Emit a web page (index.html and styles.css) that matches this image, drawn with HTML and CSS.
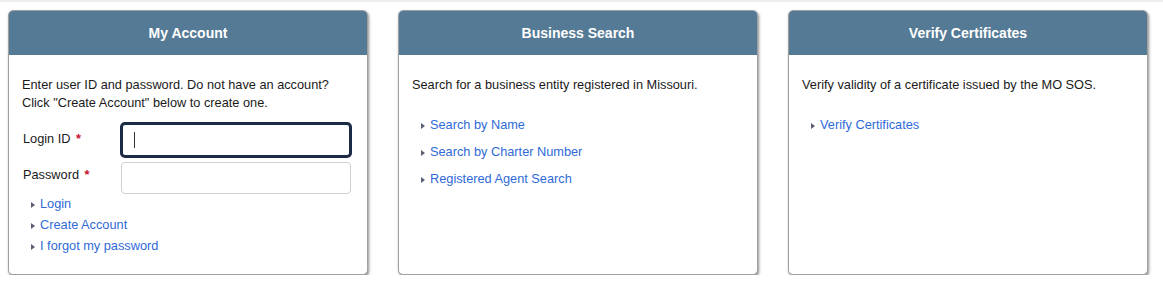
FILE: index.html
```html
<!DOCTYPE html>
<html lang="en">
<head>
    <meta charset="UTF-8">
    <meta content="width=device-width, initial-scale=1.0" name="viewport">
    <title>Missouri SOS - Business Services</title>
    <link rel="stylesheet" href="styles.css">
</head>
<body>
<div class="page">
    <div class="panels">
        <div class="panel">
            <div class="panel-header">My Account</div>
            <div class="panel-body">
                <p class="intro">Enter user ID and password. Do not have an account? Click "Create Account" below to create one.</p>
                <div class="form-row">
                    <label for="login-id">Login ID <span class="required">*</span></label>
                    <div class="field is-focused">
                        <input id="login-id" type="text">
                    </div>
                </div>
                <div class="form-row">
                    <label for="password">Password <span class="required">*</span></label>
                    <div class="field">
                        <input id="password" type="password">
                    </div>
                </div>
                <ul class="links tight">
                    <li><a href="#">Login</a></li>
                    <li><a href="#">Create Account</a></li>
                    <li><a href="#">I forgot my password</a></li>
                </ul>
            </div>
        </div>

        <div class="panel">
            <div class="panel-header">Business Search</div>
            <div class="panel-body">
                <p class="intro">Search for a business entity registered in Missouri.</p>
                <ul class="links">
                    <li><a href="#">Search by Name</a></li>
                    <li><a href="#">Search by Charter Number</a></li>
                    <li><a href="#">Registered Agent Search</a></li>
                </ul>
            </div>
        </div>

        <div class="panel">
            <div class="panel-header">Verify Certificates</div>
            <div class="panel-body">
                <p class="intro">Verify validity of a certificate issued by the MO SOS.</p>
                <ul class="links">
                    <li><a href="#">Verify Certificates</a></li>
                </ul>
            </div>
        </div>
    </div>
</div>
</body>
</html>
```

FILE: styles.css
```css
body {
    font-family: 'Liberation Sans', Arial, sans-serif;
    font-size: 12.75px;
    color: #1a1a1a;
    background-color: #fff;
    margin: 0;
}

.page {
    border-top: 2px solid #efefef;
    padding: 8px 8px 0 8px;
}

.panels {
    display: flex;
    gap: 30px;
}

.panel {
    width: 358px;
    height: 263px;
    border: 1px solid #a0a0a0;
    border-radius: 5px;
    box-shadow: 1px 2px 3px rgba(0, 0, 0, 0.45);
    overflow: hidden;
    background-color: #fff;
}

.panel-header {
    background-color: #557a95;
    color: #fff;
    font-weight: bold;
    font-size: 14px;
    text-align: center;
    height: 44px;
    line-height: 44px;
}

.panel-body {
    padding: 21px 14px 0 13px;
}

.intro {
    margin: 0;
    line-height: 18px;
}

.form-row {
    display: flex;
    align-items: flex-start;
    margin-top: 10px;
}

.form-row + .form-row {
    margin-top: 4px;
}

.form-row label {
    width: 98px;
    padding: 8px 0 0 1px;
    line-height: 18px;
}

.form-row + .form-row label {
    padding-top: 4px;
}

.required {
    color: #c8102e;
    font-weight: bold;
    margin-left: 2px;
}

.field {
    position: relative;
    flex: 1;
}

.field input {
    box-sizing: border-box;
    width: 230px;
    height: 32px;
    border: 1px solid #ccd0d5;
    border-radius: 4px;
    padding: 0 12px;
    font-family: inherit;
    font-size: 13px;
    outline: none;
}

.field.is-focused input {
    width: 232px;
    height: 36px;
    margin-left: -1px;
    border: 3px solid #1b2a45;
    border-radius: 5px;
}

/* the text caret in the focused field */
.field.is-focused::after {
    content: '';
    position: absolute;
    left: 13px;
    top: 10px;
    width: 1px;
    height: 16px;
    background-color: #333;
}

.links {
    list-style: none;
    margin: 17px 0 0 0;
    padding: 0 0 0 9px;
}

.links li {
    display: flex;
    align-items: center;
    height: 27px;
}

.links li::before {
    content: '';
    width: 0;
    height: 0;
    border-top: 3px solid transparent;
    border-bottom: 3px solid transparent;
    border-left: 4px solid #5a5f75;
    margin: 3px 5px 0 0;
}

.links a {
    color: #2f6ad8;
    text-decoration: none;
}

.links.tight {
    margin-top: -1px;
}

.links.tight li {
    height: 21px;
}
```
